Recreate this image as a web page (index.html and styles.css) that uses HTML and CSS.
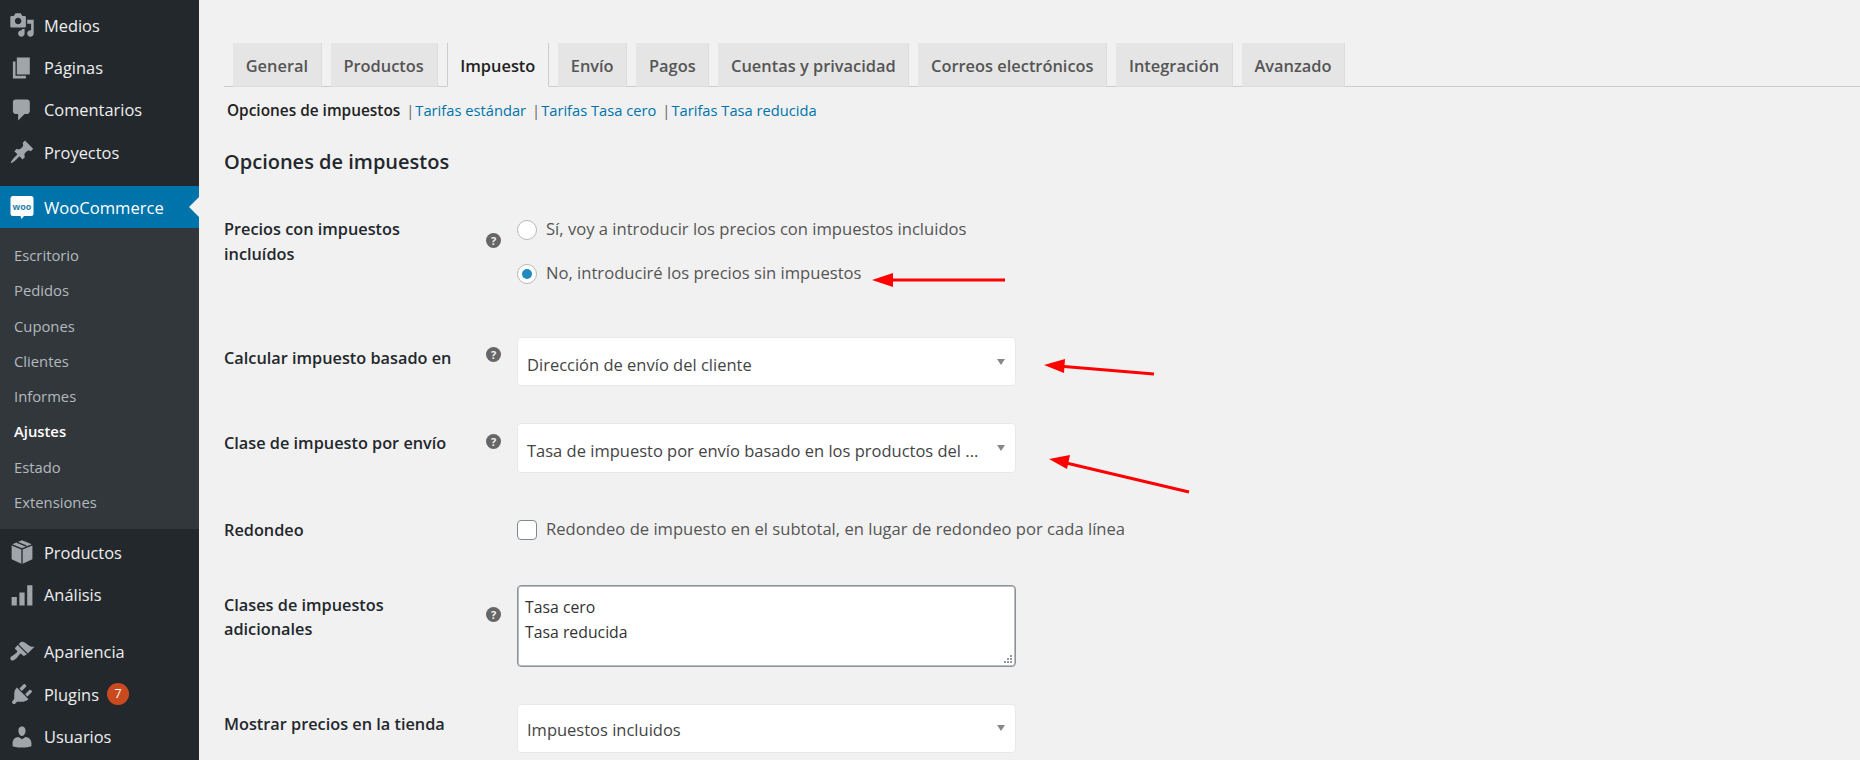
FILE: index.html
```html
<!DOCTYPE html>
<html lang="es">
<head>
<meta charset="utf-8">
<title>Ajustes de impuestos</title>
<link rel="stylesheet" href="styles.css">
</head>
<body>
<div class="page">
  <aside class="sidebar">
    <ul class="menu menu-top">
      <li class="item"><svg class="icon" viewBox="0 0 20 20"><path d="M13 11V4c0-.55-.45-1-1-1h-1.67L9 1H5L3.67 3H2c-.55 0-1 .45-1 1v7c0 .55.45 1 1 1h10c.55 0 1-.45 1-1zM7 4.500c1.380 0 2.500 1.120 2.500 2.500S8.380 9.500 7 9.500 4.500 8.380 4.500 7 5.620 4.500 7 4.500zM14 6h5v10.500c0 1.380-1.120 2.500-2.500 2.500S14 17.880 14 16.500s1.120-2.500 2.500-2.500c.17 0 .34.02.5.05V9h-3V6zm-4 8.050V13h2v3.500c0 1.380-1.120 2.500-2.500 2.500S7 17.880 7 16.500 8.120 14 9.500 14c.17 0 .34.02.5.05z"/></svg><span>Medios</span></li>
      <li class="item"><svg class="icon" viewBox="0 0 20 20"><path d="M6 15V2h10v13H6zm-1 1h8v2H3V5h2v11z"/></svg><span>Páginas</span></li>
      <li class="item"><svg class="icon" viewBox="0 0 20 20"><path d="M5 2h9c1.100 0 2 .9 2 2v7c0 1.100-.9 2-2 2h-2l-5 5v-5H5c-1.100 0-2-.9-2-2V4c0-1.100.9-2 2-2z"/></svg><span>Comentarios</span></li>
      <li class="item"><svg class="icon" viewBox="0 0 20 20"><path d="M10.440 3.020l1.820-1.820 6.360 6.350-1.830 1.820c-1.050-.68-2.480-.57-3.410.36l-.75.75c-.92.93-1.040 2.350-.35 3.410l-1.830 1.820-2.410-2.410-2.800 2.790c-.42.42-3.380 2.710-3.800 2.290s1.860-3.390 2.280-3.810l2.790-2.790L4.100 9.360l1.830-1.820c1.050.69 2.480.57 3.400-.36l.75-.75c.93-.92 1.050-2.350.36-3.410z"/></svg><span>Proyectos</span></li>
    </ul>
    <div class="item current">
      <svg class="icon" viewBox="0 0 26 26"><path class="woo-bubble" d="M4 2h18a2.500 2.500 0 0 1 2.500 2.500v15a2.500 2.500 0 0 1-2.500 2.500h-7l-2.500 3-1-3H4a2.500 2.500 0 0 1-2.500-2.500v-15A2.500 2.500 0 0 1 4 2z"/><text class="woo-text" x="13" y="15.500" text-anchor="middle">woo</text></svg>
      <span class="current-label">WooCommerce</span>
    </div>
    <ul class="submenu">
      <li>Escritorio</li>
      <li>Pedidos</li>
      <li>Cupones</li>
      <li>Clientes</li>
      <li>Informes</li>
      <li class="sub-active">Ajustes</li>
      <li>Estado</li>
      <li>Extensiones</li>
    </ul>
    <ul class="menu menu-mid">
      <li class="item"><svg class="icon" viewBox="0 0 20 20"><path d="M10 1l7.500 3L10 7.200 2.500 4zM2 5l7.500 3.100V19L2 15.600zM18 5v10.600L10.500 19V8.100z"/><path class="box-tape" d="M6 2.400l7.400 3.100"/></svg><span>Productos</span></li>
      <li class="item"><svg class="icon" viewBox="0 0 20 20"><path d="M2 11.500h4V18H2zM8 8h4v10H8zM14 2.500h4V18h-4z"/></svg><span>Análisis</span></li>
    </ul>
    <ul class="menu menu-low">
      <li class="item"><svg class="icon" viewBox="0 0 20 20"><path d="M14.480 11.060L7.410 3.990l1.500-1.500c.5-.56 2.300-.47 3.510.32 1.210.8 1.430 1.280 2.910 2.100 1.180.64 2.450 1.260 4.450.85zm-.71.71L6.700 4.700 4.930 6.470c-.39.39-.39 1.020 0 1.410l1.060 1.060c.39.39.39 1.030 0 1.420-.6.6-1.430 1.110-2.210 1.690-.35.26-.7.53-1.010.84C1.430 13.230.4 14.960 1.530 16.090c1.130 1.130 2.860.1 4.200-1.210.31-.31.58-.66.84-1.010.58-.78 1.090-1.610 1.690-2.210.39-.39 1.030-.39 1.420 0l1.060 1.060c.39.39 1.020.39 1.410 0z"/></svg><span>Apariencia</span></li>
      <li class="item"><svg class="icon" viewBox="0 0 20 20"><path d="M13.110 4.360L9.870 7.600 8 5.730l3.240-3.240c.35-.34 1.050-.2 1.560.32.52.51.66 1.210.31 1.550zm-8 1.770l.91-1.120 9.010 9.010-1.190.84c-.71.71-2.630 1.160-3.820 1.160H6.140L4.900 17.260c-.59.59-1.540.59-2.120 0-.59-.58-.59-1.530 0-2.120l1.240-1.240v-3.880c0-1.130.4-3.190 1.090-3.890zm7.260 3.970l3.240-3.240c.34-.35 1.040-.21 1.550.31.52.51.66 1.210.31 1.550l-3.240 3.250z"/></svg><span>Plugins</span><span class="badge">7</span></li>
      <li class="item"><svg class="icon" viewBox="0 0 20 20"><path d="M10 9.250c-2.270 0-2.730-3.440-2.730-3.440C7 4.020 7.820 2 9.970 2c2.160 0 2.980 2.020 2.710 3.810 0 0-.41 3.440-2.680 3.440zm0 2.570L12.720 10c2.390 0 4.520 2.330 4.520 4.530v2.490s-3.650 1.130-7.240 1.130c-3.650 0-7.240-1.130-7.240-1.130v-2.490c0-2.250 1.940-4.480 4.470-4.480z"/></svg><span>Usuarios</span></li>
    </ul>
  </aside>

  <main class="content">
    <nav class="tabs">
      <a class="tab">General</a>
      <a class="tab">Productos</a>
      <a class="tab tab-active">Impuesto</a>
      <a class="tab">Envío</a>
      <a class="tab">Pagos</a>
      <a class="tab">Cuentas y privacidad</a>
      <a class="tab">Correos electrónicos</a>
      <a class="tab">Integración</a>
      <a class="tab">Avanzado</a>
    </nav>
    <div class="subnav">
      <strong>Opciones de impuestos</strong><span class="sep">|</span><a>Tarifas estándar</a><span class="sep">|</span><a>Tarifas Tasa cero</a><span class="sep">|</span><a>Tarifas Tasa reducida</a>
    </div>
    <h2 class="title">Opciones de impuestos</h2>

    <form class="form">
      <div class="row row-prices">
        <div class="label label-prices">Precios con impuestos incluídos</div>
        <div class="help help-prices">?</div>
        <div class="control">
          <label class="choice choice-first"><input type="radio" name="prices"><span>Sí, voy a introducir los precios con impuestos incluidos</span></label>
          <label class="choice"><input type="radio" name="prices" checked><span>No, introduciré los precios sin impuestos</span></label>
        </div>
      </div>
      <div class="row row-based">
        <div class="label label-based">Calcular impuesto basado en</div>
        <div class="help help-based">?</div>
        <div class="select select-based"><span>Dirección de envío del cliente</span></div>
      </div>
      <div class="row row-shipping">
        <div class="label label-shipping">Clase de impuesto por envío</div>
        <div class="help help-shipping">?</div>
        <div class="select select-shipping"><span>Tasa de impuesto por envío basado en los productos del ...</span></div>
      </div>
      <div class="row row-round">
        <div class="label">Redondeo</div>
        <div></div>
        <label class="choice"><input type="checkbox"><span>Redondeo de impuesto en el subtotal, en lugar de redondeo por cada línea</span></label>
      </div>
      <div class="row row-classes">
        <div class="label label-classes">Clases de impuestos adicionales</div>
        <div class="help help-classes">?</div>
        <textarea class="textarea" readonly>Tasa cero
Tasa reducida</textarea>
      </div>
      <div class="row row-display">
        <div class="label label-display">Mostrar precios en la tienda</div>
        <div></div>
        <div class="select select-display"><span>Impuestos incluidos</span></div>
      </div>
    </form>
  </main>

  <svg class="arrows" viewBox="0 0 1860 760" width="1860" height="760">
    <path class="arrow-line" d="M1005 280H885"/>
    <path class="arrow-head" d="M872 280l21-7v14z"/>
    <path class="arrow-line" d="M1154 374L1058 366"/>
    <path class="arrow-head" d="M1044 365l21-6-1 14z"/>
    <path class="arrow-line" d="M1189 492L1062 462"/>
    <path class="arrow-head" d="M1049 459l21-4-3 14z"/>
  </svg>
</div>
</body>
</html>
```

FILE: styles.css
```css
* { box-sizing: border-box; }
html, body { margin: 0; padding: 0; height: 760px; overflow: hidden; }
body { font-family: "Open Sans", "Noto Sans", sans-serif; background: #f1f1f1; color: #444; font-size: 16.6px; }
ul { list-style: none; margin: 0; padding: 0; }

.page { display: flex; height: 760px; overflow: hidden; position: relative; }

/* Sidebar */
.sidebar { width: 199px; flex: none; background: #23282d; color: #eee; padding-top: 4px; font-size: 16.4px; }
.item { display: flex; align-items: center; height: 42.4px; padding-left: 9px; gap: 9px; position: relative; }
.icon { width: 26px; height: 26px; flex: none; fill: #a0a5aa; }
.current { height: 42px; margin-top: 12.4px; background: #0073aa; color: #fff; font-size: 16.6px; }
.current-label { margin-top: 2px; }
.current::after { content: ""; position: absolute; right: 0; top: 11px; border: 10px solid transparent; border-right-color: #f1f1f1; border-left-width: 0; }
.woo-bubble { fill: #fff; }
.woo-text { font-family: "Open Sans", sans-serif; font-size: 9px; font-weight: 700; fill: #2f7fae; }
.box-tape { fill: none; stroke: #23282d; stroke-width: 1; }
.submenu { background: #32373c; color: #b4b9be; padding: 10px 0 8px 14px; height: 301px; font-size: 14.8px; }
.submenu li { height: 35.3px; line-height: 35.3px; }
.submenu .sub-active { color: #fff; font-weight: 600; }
.menu-mid { margin-top: 2px; }
.menu-low { margin-top: 15px; }
.badge { width: 22px; height: 22px; border-radius: 50%; background: #ca4a1f; color: #fff; font-size: 12.5px; line-height: 22px; text-align: center; margin-left: -1px; }

/* Main column */
.content { flex: 1; padding: 43px 0 0 25px; min-width: 0; }
.tabs { display: flex; gap: 9px; height: 44px; padding-left: 9px; border-bottom: 1px solid #ccc; font-size: 16.4px; font-weight: 600; }
.tab { height: 44px; padding: 0 12.7px; line-height: 45px; background: #e5e5e5; color: #555; border: 1px solid #ddd; border-width: 0 1px 1px 0; }
.tab-active { background: #f1f1f1; color: #222; border: 1px solid #ccc; border-bottom-color: #f1f1f1; border-top: 0; }
.subnav { margin-top: 11px; padding-left: 3px; line-height: 24px; font-size: 14.7px; color: #0073aa; }
.subnav strong { color: #222; font-weight: 600; font-size: 15.4px; }
.subnav .sep { color: #666; margin: 0 1px 0 6px; }
.title { margin: 24px 0 41px; font-size: 20px; line-height: 30px; font-weight: 600; color: #23282d; }

/* Form rows */
.row { display: grid; grid-template-columns: 262px 31px 499px; align-items: start; }
.label { font-weight: 600; line-height: 24px; font-size: 16.3px; color: #23282d; width: 220px; }
.help { width: 15px; height: 15px; border-radius: 50%; background: #666; color: #f1f1f1; font-size: 11px; font-weight: 700; line-height: 15px; text-align: center; }
.row-prices { margin-bottom: 52px; }
.row-based { margin-bottom: 37px; }
.row-shipping { margin-bottom: 45px; }
.row-round { margin-bottom: 43px; }
.row-classes { margin-bottom: 37px; }
.help-prices { margin-top: 14.5px; }
.help-based { margin-top: 9.5px; }
.help-shipping { margin-top: 10.5px; }
.help-classes { margin-top: 21.5px; }
.label-prices { margin-top: -1px; line-height: 25px; }
.label-based { margin-top: 9px; width: 260px; }
.label-shipping { margin-top: 8px; width: 260px; }
.label-classes { margin-top: 8px; }
.label-display { margin-top: 8px; width: 260px; }

.choice { display: flex; align-items: center; gap: 9px; line-height: 24px; color: #555; white-space: nowrap; }
.choice span { margin-top: -1px; }
.choice-first { margin-bottom: 21px; }
.choice input { appearance: none; margin: 0; width: 20px; height: 20px; flex: none; background: #fff; border: 1px solid #b4b9be; position: relative; }
.choice input[type="radio"] { border-radius: 50%; }
.choice input[type="checkbox"] { border-radius: 4px; border-color: #7e8993; }
.choice input:checked::before { content: ""; position: absolute; left: 4px; top: 4px; width: 10px; height: 10px; border-radius: 50%; background: #1e8cbe; }

.select { position: relative; width: 499px; background: #fff; border: 1px solid #e9e9e9; border-radius: 4px; color: #444; padding-left: 9px; white-space: nowrap; font-size: 16.5px; }
.select::after { content: ""; position: absolute; right: 10px; border: 4.5px solid transparent; border-top: 6px solid #888; border-bottom: 0; }
.select-based { height: 49px; line-height: 24px; padding-top: 15px; }
.select-based::after { top: 21px; }
.select-shipping { height: 50px; padding-top: 15px; line-height: 24px; }
.select-shipping::after { top: 21px; }
.select-display { height: 49px; padding-top: 13px; line-height: 24px; }
.select-display::after { top: 20px; }

.textarea { display: block; width: 499px; height: 82px; margin: 0; padding: 9px 7px; border: 1px solid #8c9399; border-radius: 4px; box-shadow: inset 0 0 0 1px #b8bdc1; color: #333; font: 15.8px/25px "Open Sans", sans-serif; resize: none; overflow: hidden;
  background-color: #fff;
  background-image: linear-gradient(#999, #999), linear-gradient(#999, #999), linear-gradient(#999, #999), linear-gradient(#999, #999), linear-gradient(#999, #999), linear-gradient(#999, #999);
  background-repeat: no-repeat;
  background-size: 2px 2px;
  background-position: right 3px bottom 3px, right 6px bottom 3px, right 9px bottom 3px, right 3px bottom 6px, right 6px bottom 6px, right 3px bottom 9px; }

/* Annotations drawn over the page */
.arrows { position: absolute; left: 0; top: 0; pointer-events: none; }
.arrow-line { fill: none; stroke: #f00; stroke-width: 3; }
.arrow-head { fill: #f00; }
```
